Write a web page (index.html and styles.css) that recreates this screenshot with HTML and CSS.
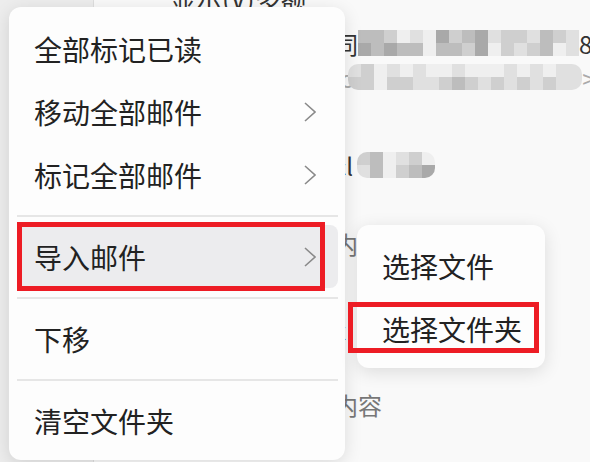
FILE: index.html
```html
<!DOCTYPE html>
<html lang="zh-CN">

<head>
    <meta charset="UTF-8">
    <meta name="viewport" content="width=device-width, initial-scale=1.0">
    <title>邮件</title>
    <link rel="stylesheet" href="styles.css">
</head>

<body>
    <div class="page">
        <div class="side"></div>
        <div class="list">
            <div class="title">显示(V)多额</div>
            <div class="row r1">
                <span class="dark">同</span>
                <div class="pix w17">
                    <i class="b"></i><i class="b"></i><i class="c"></i><i class="e"></i><i class="d"></i><i class="e"></i><i class="a"></i><i class="c"></i><i class="b"></i><i class="a"></i><i class="d"></i><i class="c"></i><i class="c"></i><i class="d"></i><i class="b"></i><i class="c"></i><i class="d"></i>
                    <i class="a"></i><i class="b"></i><i class="a"></i><i class="b"></i><i class="b"></i><i class="e"></i><i class="b"></i><i class="b"></i><i class="c"></i><i class="a"></i><i class="e"></i><i class="c"></i><i class="d"></i><i class="c"></i><i class="b"></i><i class="e"></i><i class="d"></i>
                </div>
                <span class="dark">8</span>
            </div>
            <div class="row r2">
                <span class="light">c</span>
                <div class="pix w18 round">
                    <i class="d"></i><i class="c"></i><i class="e"></i><i class="d"></i><i class="e"></i><i class="d"></i><i class="e"></i><i class="e"></i><i class="d"></i><i class="e"></i><i class="e"></i><i class="e"></i><i class="d"></i><i class="e"></i><i class="d"></i><i class="e"></i><i class="d"></i><i class="d"></i>
                    <i class="c"></i><i class="c"></i><i class="e"></i><i class="c"></i><i class="c"></i><i class="d"></i><i class="d"></i><i class="c"></i><i class="b"></i><i class="c"></i><i class="d"></i><i class="c"></i><i class="d"></i><i class="c"></i><i class="d"></i><i class="c"></i><i class="d"></i><i class="d"></i>
                </div>
                <span class="light">&gt;</span>
            </div>
            <div class="row r3">
                <span class="dark">cl</span>
                <div class="pix w6 round">
                    <i class="c"></i><i class="b"></i><i class="e"></i><i class="d"></i><i class="c"></i><i class="e"></i>
                    <i class="d"></i><i class="b"></i><i class="e"></i><i class="c"></i><i class="b"></i><i class="a"></i>
                </div>
            </div>
            <div class="row r4"><span class="grey">内</span></div>
            <div class="row r5"><span class="dark">x</span></div>
            <div class="row r6"><span class="grey">内容</span></div>
        </div>

        <div class="menu">
            <div class="item">全部标记已读</div>
            <div class="item">移动全部邮件
                <svg class="arrow" width="12" height="20" viewBox="0 0 12 20"><polyline points="1,1 11,10 1,19" /></svg>
            </div>
            <div class="item">标记全部邮件
                <svg class="arrow" width="12" height="20" viewBox="0 0 12 20"><polyline points="1,1 11,10 1,19" /></svg>
            </div>
            <div class="sep"></div>
            <div class="item active">导入邮件
                <svg class="arrow" width="12" height="20" viewBox="0 0 12 20"><polyline points="1,1 11,10 1,19" /></svg>
            </div>
            <div class="sep"></div>
            <div class="item">下移</div>
            <div class="sep"></div>
            <div class="item">清空文件夹</div>
        </div>

        <div class="submenu">
            <div class="item">选择文件</div>
            <div class="item">选择文件夹</div>
        </div>

        <div class="mark mark1"></div>
        <div class="mark mark2"></div>
    </div>
</body>

</html>
```

FILE: styles.css
```css
body {
    margin: 0;
    font-family: "Noto Sans CJK SC", "Noto Sans", sans-serif;
}

.page {
    position: relative;
    width: 590px;
    height: 462px;
    overflow: hidden;
    display: flex;
    background-color: #f9f9f9;
}

.side {
    width: 93px;
    flex-shrink: 0;
    background-color: #ededed;
    border-right: 1px solid #dedede;
}

.list {
    flex: 1;
    display: flex;
    flex-direction: column;
}

.title {
    margin-top: -17px;
    padding-left: 76px;
    height: 30px;
    line-height: 30px;
    font-size: 26px;
    color: #333;
}

.row {
    display: flex;
    align-items: center;
    height: 26px;
    padding-left: 240px;
    font-size: 24px;
    white-space: nowrap;
}

.r1 { margin-top: 17px; }
.r2 { margin-top: 8px; }
.r3 { margin-top: 62px; }
.r4 { margin-top: 52px; }
.r5 { margin-top: 60px; }
.r6 { margin-top: 49px; }

.dark { color: #333; }
.light { color: #aaa; }
.grey { color: #777; }

.r2 .light:first-child { margin-left: 6px; }

.pix {
    display: grid;
    grid-auto-rows: 13px;
    overflow: hidden;
}

.pix.w17 { grid-template-columns: repeat(17, 13px); }
.pix.w18 { grid-template-columns: repeat(18, 13px); margin-left: -4px; }
.pix.w6 { grid-template-columns: repeat(6, 13px); margin-left: 4px; }
.pix.round { border-radius: 10px; }

.pix .a { background-color: #a9a9a9; }
.pix .b { background-color: #bdbdbd; }
.pix .c { background-color: #cfcfcf; }
.pix .d { background-color: #e0e0e0; }
.pix .e { background-color: #efefef; }

.menu {
    position: absolute;
    left: 9px;
    top: 7px;
    width: 336px;
    height: 453px;
    box-sizing: border-box;
    padding: 10px 7px 8px 8px;
    background-color: #fdfdfd;
    border-radius: 12px;
    box-shadow: 0 4px 18px rgba(0, 0, 0, 0.12);
}

.item {
    height: 63px;
    display: flex;
    align-items: center;
    justify-content: space-between;
    padding: 0 22px 0 17px;
    font-size: 28px;
    color: #222;
    white-space: nowrap;
    border-radius: 8px;
}

.item.active {
    background-color: #ececee;
}

.arrow polyline {
    fill: none;
    stroke: #8a8a8a;
    stroke-width: 1.6;
}

.sep {
    height: 2px;
    margin: 9px 0 8px;
    background-color: #e6e6e6;
}

.submenu {
    position: absolute;
    left: 357px;
    top: 225px;
    width: 188px;
    height: 143px;
    box-sizing: border-box;
    padding: 9px 8px 8px;
    background-color: #fdfdfd;
    border-radius: 12px;
    box-shadow: 0 4px 18px rgba(0, 0, 0, 0.12);
}

.submenu .item {
    padding-right: 0;
}

.mark {
    position: absolute;
    box-sizing: border-box;
    border: 5px solid #ed1c24;
}

.mark1 {
    left: 17px;
    top: 222px;
    width: 308px;
    height: 69px;
}

.mark2 {
    left: 348px;
    top: 302px;
    width: 191px;
    height: 51px;
}
```
